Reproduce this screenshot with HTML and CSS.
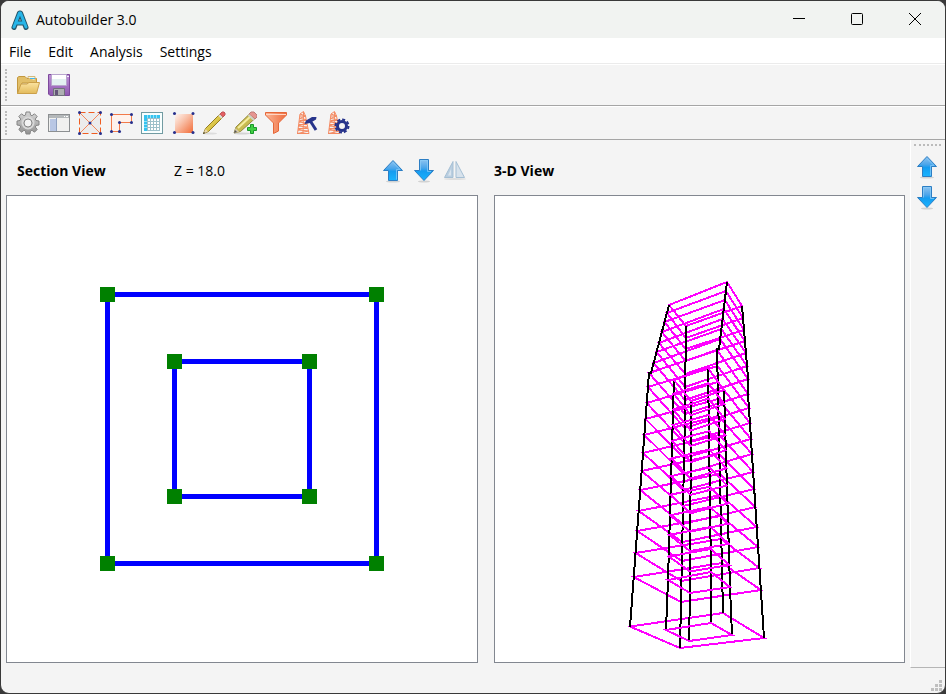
FILE: index.html
```html
<!DOCTYPE html>
<html lang="en">
<head>
<meta charset="utf-8">
<title>Autobuilder 3.0</title>
<link rel="stylesheet" href="styles.css">
</head>
<body>
<svg class="defs" aria-hidden="true">
  <defs>
    <linearGradient id="blue" x1="0" y1="0" x2="0" y2="1"><stop offset="0" stop-color="#8fc4f0"/><stop offset=".4" stop-color="#4ba5ea"/><stop offset=".55" stop-color="#159cf0"/><stop offset="1" stop-color="#18b4ff"/></linearGradient>
    <linearGradient id="gold" x1="0" y1="0" x2="0" y2="1"><stop offset="0" stop-color="#fbe3a0"/><stop offset="1" stop-color="#e3bb5c"/></linearGradient>
    <linearGradient id="purple" x1="0" y1="0" x2="0" y2="1"><stop offset="0" stop-color="#bd91d6"/><stop offset="1" stop-color="#8e58b0"/></linearGradient>
    <linearGradient id="steel" x1="0" y1="0" x2="0" y2="1"><stop offset="0" stop-color="#d6d6d6"/><stop offset="1" stop-color="#929292"/></linearGradient>
    <linearGradient id="orange" x1="0" y1="0" x2="1" y2="1"><stop offset="0" stop-color="#fff5f0"/><stop offset=".4" stop-color="#f9c3ac"/><stop offset="1" stop-color="#f26c38"/></linearGradient>
    <linearGradient id="funnel" x1="0" y1="0" x2="1" y2="0"><stop offset="0" stop-color="#fbb595"/><stop offset="1" stop-color="#ee6c3d"/></linearGradient>
    <linearGradient id="pencil" x1="0" y1="0" x2="1" y2="1"><stop offset="0" stop-color="#fff27a"/><stop offset="1" stop-color="#b99b18"/></linearGradient>
    <symbol id="arrow-up" viewBox="0 0 24 24">
      <ellipse cx="12" cy="22.5" rx="7" ry="1" fill="#d2d2d2"/>
      <path d="M12 1.500 21.500 11.500H16.500V21.500H7.500V11.500H2.500Z" fill="url(#blue)" stroke="#2c7ec4"/>
      <path d="M12 3.500 19 10.500H15.500V20.500" fill="none" stroke="#8bcdf8" opacity=".7"/>
    </symbol>
    <symbol id="arrow-down" viewBox="0 0 24 24">
      <ellipse cx="12" cy="22.5" rx="6" ry="1" fill="#d2d2d2"/>
      <path d="M7.500 .5H16.500V11.500H21.500L12 21.500 2.500 11.500H7.500Z" fill="url(#blue)" stroke="#2c7ec4"/>
      <path d="M8.500 11.500V1.500H15.500V12.500H19" fill="none" stroke="#8bcdf8" opacity=".7"/>
    </symbol>
    <symbol id="tower" viewBox="0 0 24 24">
      <path d="M5 3 8.500 .5 10.500 5 14 22.500M5 3 2.500 22.500M8.500 1 8 22M5 3 10.500 5 4.500 7.500 11 8.500 4 11 11.500 12 3.500 15 12.500 16 3 19 13.500 20 2.500 22.500M4.500 5H10.500M4.500 9.500H11.500M4 13.500H12M3 17.500H13M2 22.500H14" fill="none" stroke="#f48a62"/>
    </symbol>
  </defs>
</svg>
<div class="window">
  <header class="titlebar">
    <svg class="logo" viewBox="0 0 18 20"><path d="M3 17.500 8.500 3H9.500L15 17.500M5.500 13H12.500" fill="none" stroke="#24566b" stroke-width="5" stroke-linejoin="round" stroke-linecap="round"/><path d="M3 17 8.500 3H9.500L15 17M5.500 13H12.500" fill="none" stroke="#27b5e8" stroke-width="3" stroke-linejoin="round" stroke-linecap="round"/></svg>
    <span class="title">Autobuilder 3.0</span>
    <button class="caption" aria-label="Minimize"><svg viewBox="0 0 14 14"><path d="M1 6.500H13" stroke="#000"/></svg></button>
    <button class="caption" aria-label="Maximize"><svg viewBox="0 0 14 14"><rect x="1.500" y="1.500" width="11" height="11" rx="1" fill="none" stroke="#000"/></svg></button>
    <button class="caption" aria-label="Close"><svg viewBox="0 0 14 14"><path d="M1 1 13 13M13 1 1 13" stroke="#000"/></svg></button>
  </header>
  <nav class="menubar">
    <button>File</button><button>Edit</button><button>Analysis</button><button>Settings</button>
  </nav>
  <div class="toolbar toolbar-file" role="toolbar">
    <span class="grip"></span>
    <button aria-label="Open"><svg viewBox="0 0 24 24"><path d="M1.500 20.500V4.500L3 3.500H9L11 5.500H20.500V10H6Z" fill="#e2bf69" stroke="#c3983f"/><path d="M12 5V3.500H19V7" fill="#f5f5e8" stroke="#d4b878"/><path d="M14 5.500H19" stroke="#3fb6ef"/><path d="M1.500 20.500 5 11H11L13 9.500H23.500L20.500 20.500Z" fill="url(#gold)" stroke="#cba04a"/></svg></button>
    <button aria-label="Save"><svg viewBox="0 0 24 24"><path d="M1.500 1.500H22.500V22.500H3L1.500 21Z" fill="url(#purple)" stroke="#7e489d"/><path d="M4.500 1.500H19.500V12.500H4.500Z" fill="#e3f1f1" stroke="#b9a5ce"/><path d="M5 2H19V6H5Z" fill="#fff"/><path d="M6.500 15.500H17.500V22.500H6.500Z" fill="#aeb0b2" stroke="#70727b"/><path d="M8 17H11V22H8Z" fill="#65557a"/><path d="M20 3H22V4H20Z" fill="#f6ebff"/></svg></button>
  </div>
  <div class="toolbar" role="toolbar">
    <span class="grip"></span>
    <button aria-label="Options"><svg viewBox="0 0 24 24"><path d="M9.500 4 10 1H14L14.500 4 16 4.700 18.500 2.800 21.200 5.500 19.300 8 20 9.500 23 10V14L20 14.500 19.300 16 21.200 18.500 18.500 21.200 16 19.300 14.500 20 14 23H10L9.500 20 8 19.300 5.500 21.200 2.800 18.500 4.700 16 4 14.500 1 14V10L4 9.500 4.700 8 2.800 5.500 5.500 2.800 8 4.700Z" fill="url(#steel)" stroke="#858585"/><circle cx="12" cy="12" r="5.500" fill="none" stroke="#d8d8d8" stroke-width="2"/><circle cx="12" cy="12" r="4" fill="#f4f4f4" stroke="#888"/></svg></button>
    <button aria-label="Panels"><svg viewBox="0 0 24 24"><rect x="1.500" y="3.500" width="21" height="17" fill="#f1f1f0" stroke="#8c8f91"/><path d="M2 4H22V7H2Z" fill="#b4b8ba"/><path d="M3 8H9V20H3Z" fill="#b9c7e4"/><path d="M9.500 7V20" stroke="#8fa1c0"/><path d="M17 5.500H18M19 5.500H21" stroke="#fff"/></svg></button>
    <button aria-label="Braced section"><svg viewBox="0 0 24 24"><rect x="2" y="2" width="20" height="20" fill="#ececec"/><path d="M1.500 1.500H22.500V22.500H1.500Z" fill="none" stroke="#ef5d22" stroke-dasharray="6 3"/><path d="M1.500 1.500 22.500 22.500M22.500 1.500 1.500 22.500" stroke="#f5885c"/><g fill="#28308c"><circle cx="1.500" cy="1.500" r="1.500"/><circle cx="22.500" cy="1.500" r="1.500"/><circle cx="1.500" cy="22.500" r="1.500"/><circle cx="22.500" cy="22.500" r="1.500"/><circle cx="12" cy="12" r="1.500"/></g></svg></button>
    <button aria-label="Floor plan"><svg viewBox="0 0 24 24"><path d="M2.500 3.500H22.500V11.500H10.500V20.500H2.500Z" fill="#fff2ec" stroke="#f27a4a"/><g fill="#28308c"><circle cx="2.500" cy="3.500" r="1.500"/><circle cx="22.500" cy="3.500" r="1.500"/><circle cx="22.500" cy="11.500" r="1.500"/><circle cx="10.500" cy="11.500" r="1.500"/><circle cx="10.500" cy="20.500" r="1.500"/><circle cx="2.500" cy="20.500" r="1.500"/></g></svg></button>
    <button aria-label="Table"><svg viewBox="0 0 24 24"><rect x="1.500" y="1.500" width="21" height="21" fill="#f8ffff" stroke="#719ba2"/><path d="M4 4H20V20H4Z" fill="#9dc0ca"/><path d="M4 4H20V7H4ZM4 7H7V20H4Z" fill="#35c3ef"/><path d="M8 8H10V10H8ZM11 8H13V10H11ZM14 8H16V10H14ZM17 8H19V10H17ZM8 11H10V13H8ZM11 11H13V13H11ZM14 11H16V13H14ZM17 11H19V13H17ZM8 14H10V16H8ZM11 14H13V16H11ZM14 14H16V16H14ZM17 14H19V16H17ZM8 17H10V19H8ZM11 17H13V19H11ZM14 17H16V19H14ZM17 17H19V19H17Z" fill="#fff"/><path d="M7.500 4V7M10.500 4V7M13.500 4V7M16.500 4V7M4 10.500H7M4 13.500H7M4 16.500H7" stroke="#91e2fa"/></svg></button>
    <button aria-label="Panel"><svg viewBox="0 0 24 24"><path d="M4 3H22V22H4Z" fill="url(#orange)"/><g fill="#28308c"><circle cx="3.500" cy="2.500" r="1.500"/><circle cx="22" cy="2.500" r="1.500"/><circle cx="3.500" cy="21.500" r="1.500"/><circle cx="22" cy="21.500" r="1.500"/></g></svg></button>
    <button aria-label="Edit"><svg viewBox="0 0 24 24"><ellipse cx="8" cy="22.500" rx="7" ry="1" fill="#ddd"/><path d="M1.500 22.500 3.500 17.500 18 3 21 6 6.500 20.500Z" fill="url(#pencil)" stroke="#947c23"/><path d="M18 3 20 1H22L23 2V4L21 6Z" fill="#e45e62" stroke="#bf5659"/><path d="M17 4 20 7" stroke="#ddd" stroke-width="2"/><path d="M1.500 22.500 3.500 18 6 20.500Z" fill="#e9d6ae"/><path d="M1 23 2 21 3 22Z" fill="#222"/></svg></button>
    <button aria-label="Add element"><svg viewBox="0 0 24 24"><ellipse cx="9" cy="22.500" rx="8" ry="1" fill="#d4d4d4"/><path d="M1 22 3 16 17 2.500 22 7.500 7.500 20.500Z" fill="#c8bb51" stroke="#968b42"/><path d="M5 17 18.500 4.500" stroke="#f5eda0" stroke-width="2"/><path d="M16 3 18 1H21L24 4V6L22 8Z" fill="#e69591" stroke="#bd7d79"/><path d="M15.500 4 21 9" stroke="#cfd3c8" stroke-width="2"/><path d="M1 22 2.500 17 6.500 21Z" fill="#d5c9a8"/><path d="M1 22 2 19 4 21Z" fill="#555"/><path d="M17.500 13.500H20.500V16.500H23.500V19.500H20.500V22.500H17.500V19.500H14.500V16.500H17.500Z" fill="#40cf42" stroke="#18982a"/></svg></button>
    <button aria-label="Filter"><svg viewBox="0 0 24 24"><path d="M1.500 1.500H22.500V4L14.500 12V20L9.500 22.500V12L1.500 4Z" fill="url(#funnel)" stroke="#e66739"/><path d="M2 3.500H22" stroke="#ffd6c4"/></svg></button>
    <button aria-label="Build tower"><svg viewBox="0 0 24 24"><use href="#tower" width="24" height="24"/><path d="M9.500 13 11 9.500 17 6 21.500 6 21 8.500 15 12Z" fill="#27348b"/><path d="M15 9.500 21 19" stroke="#27348b" stroke-width="3"/></svg></button>
    <button aria-label="Tower settings"><svg viewBox="0 0 24 24"><use href="#tower" width="24" height="24"/><circle cx="16" cy="15" r="4.500" fill="#f4f4f4" stroke="#27348b" stroke-width="3"/><circle cx="16" cy="15" r="6.500" fill="none" stroke="#27348b" stroke-width="2" stroke-dasharray="3 2"/></svg></button>
  </div>
  <div class="workspace">
    <main class="views">
      <section class="view view-section">
        <div class="view-head">
          <h2>Section View</h2><span class="level">Z = 18.0</span>
          <button aria-label="Level up"><svg><use href="#arrow-up"/></svg></button>
          <button aria-label="Level down"><svg><use href="#arrow-down"/></svg></button>
          <button aria-label="Mirror" disabled><svg viewBox="0 0 24 24"><ellipse cx="12" cy="20" rx="11" ry="1" fill="#dedede"/><path d="M10 2.500V18.500H1.500Z" fill="#b9cee0" stroke="#a5bfd4"/><path d="M13 2.500V18.500H21.500Z" fill="#d7e2ec" stroke="#a5bfd4"/><path d="M8 10V16.500H5Z" fill="#d9e4ee"/></svg></button>
        </div>
        <div class="canvas"><svg viewBox="0 0 470 466" role="img" aria-label="Section plan">
          <g fill="none" stroke="#00f" stroke-width="5"><rect x="100.500" y="98.500" width="269" height="269"/><rect x="167.500" y="165.500" width="135" height="135"/></g>
          <g fill="#008000"><rect x="93" y="91" width="15" height="15"/><rect x="362" y="91" width="15" height="15"/><rect x="93" y="360" width="15" height="15"/><rect x="362" y="360" width="15" height="15"/><rect x="160" y="158" width="15" height="15"/><rect x="295" y="158" width="15" height="15"/><rect x="160" y="293" width="15" height="15"/><rect x="295" y="293" width="15" height="15"/></g>
        </svg></div>
      </section>
      <section class="view view-model">
        <div class="view-head"><h2>3-D View</h2></div>
        <div class="canvas"><svg id="model" viewBox="495 196 409 466" role="img" aria-label="Tower wireframe"></svg></div>
      </section>
    </main>
    <aside class="sidebar">
      <span class="grip-h"></span>
      <button aria-label="View up"><svg><use href="#arrow-up"/></svg></button>
      <button aria-label="View down"><svg><use href="#arrow-down"/></svg></button>
    </aside>
  </div>
  <footer class="statusbar"><svg class="resize" viewBox="0 0 11 11"><path d="M8 0H11V3H8ZM4 4H7V7H4ZM8 4H11V7H8ZM0 8H3V11H0ZM4 8H7V11H4ZM8 8H11V11H8Z" fill="#bfbfbf"/></svg></footer>
</div>
<script src="model.js"></script>
</body>
</html>
```
FILE: styles.css
```css
* { box-sizing: border-box; }
body {
  margin: 0;
  background: #393939;
  color: #000;
  font: 14px/20px "Open Sans", "Noto Sans", sans-serif;
}
button {
  display: flex;
  align-items: center;
  justify-content: center;
  margin: 0;
  padding: 0;
  border: 0;
  background: none;
  color: inherit;
  font: inherit;
}
svg { display: block; }
.defs { position: absolute; width: 0; height: 0; }
.window {
  display: flex;
  flex-direction: column;
  height: 100vh;
  border: 1px solid #393939;
  border-radius: 9px;
  background: #f4f4f4;
  overflow: hidden;
}
.titlebar {
  display: flex;
  align-items: center;
  height: 37px;
  padding-left: 10px;
  background: #f1f3f1;
}
.logo { width: 18px; height: 20px; }
.title { flex: 1; padding-left: 7px; }
.caption { width: 58px; height: 35px; align-self: flex-start; }
.caption:last-child { margin-right: 1px; }
.caption svg { width: 14px; height: 14px; }
.menubar {
  display: flex;
  gap: 17px;
  height: 26px;
  padding: 2px 0 0 8px;
  background: #fff;
  border-bottom: 1px solid #ebebeb;
}
.toolbar {
  display: flex;
  align-items: center;
  gap: 7px;
  height: 34px;
  padding-left: 4px;
  border-top: 1px solid #fff;
  border-bottom: 1px solid #a5a5a5;
}
.toolbar-file { height: 42px; }
.toolbar svg, .view-head svg, .sidebar svg { width: 24px; height: 24px; }
.grip {
  align-self: stretch;
  width: 2px;
  margin: 4px 0;
  border-left: 2px dotted #bbb;
}
.grip + button { margin-left: 2px; }
.workspace { display: flex; flex: 1; min-height: 0; }
.views {
  display: flex;
  flex: 1;
  gap: 16px;
  min-width: 0;
  padding: 0 5px 5px;
}
.view { display: flex; flex-direction: column; min-width: 0; }
.view-section { flex: 472 1 0; }
.view-model { flex: 411 1 0; }
.view-head {
  display: flex;
  align-items: center;
  gap: 7px;
  height: 55px;
  padding: 6px 11px 0 0;
}
h2 { margin: 0; font-size: 14px; line-height: 20px; }
.view-section h2 { width: 150px; padding-left: 11px; }
.level { flex: 1; padding-left: 11px; }
.canvas {
  flex: 1;
  min-height: 0;
  border: 1px solid #828790;
  background: #fff;
}
.canvas svg { width: 100%; height: 100%; }
.sidebar {
  display: flex;
  flex-direction: column;
  align-items: center;
  gap: 7px;
  width: 35px;
  padding: 4px 2px 0 0;
  border-left: 1px solid #fff;
  border-bottom: 1px solid #b5b5b5;
}
.grip-h { width: 27px; margin-bottom: 2px; border-top: 2px dotted #bbb; }
.statusbar {
  display: flex;
  align-items: flex-end;
  justify-content: flex-end;
  height: 25px;
  padding: 0 3px 2px;
}
.resize { width: 11px; height: 11px; }
```
FILE: model.js
```js
// Corner order: left, back, right, front. Each entry lists the y of every floor.
const outerY = [
  [626.5, 577, 553, 531, 511, 490, 471, 453, 435, 419, 403, 387, 373, 363, 352, 343, 332, 322, 313, 305],
  [613, 563, 539, 516, 495, 474, 454, 435, 416, 399, 382, 366, 350, 339, 329, 319, 309, 300, 291, 282],
  [638, 590, 568, 547, 527, 507, 489, 472, 454, 439, 423, 408, 394, 379, 366, 353, 341, 330, 318, 306],
  [648, 602, 581, 561, 542, 524, 506, 490, 474, 458, 443, 428, 414, 400, 387, 374, 361, 349, 338, 326]
];
// Column axes: base, setback and top positions.
const outerAxis = [
  [[630, 627], [649, 373], [651, 373], [669, 305]],
  [[723, 613], [717, 349], [719, 349], [727, 282]],
  [[764, 638], [748, 394], [748, 378], [742, 306]],
  [[680, 648], [685, 414], [685, 400], [686, 326]]
];
const innerAxis = [
  [[666, 630], [668, 580], [674, 380]],
  [[711, 623], [711, 572], [708, 368]],
  [[732, 635], [730, 587], [724, 390]],
  [[689, 641], [690, 593], [691, 401]]
];
const SVG = "http://www.w3.org/2000/svg";
const model = document.getElementById("model");

function add(points, color, closed) {
  const el = document.createElementNS(SVG, closed ? "polygon" : "polyline");
  el.setAttribute("points", points.map(p => p.join(",")).join(" "));
  el.setAttribute("fill", "none");
  el.setAttribute("stroke", color);
  el.setAttribute("stroke-width", 2);
  el.setAttribute("shape-rendering", "crispEdges");
  model.appendChild(el);
}

function xAt(axis, y, upper) {
  const [a, b] = upper ? [axis[2], axis[3]] : [axis[0], axis[1]];
  return a[0] + (b[0] - a[0]) * (y - a[1]) / (b[1] - a[1]);
}

for (let floor = 0; floor < 20; floor++) {
  add(outerAxis.map((axis, i) => {
    const y = outerY[i][floor];
    return [xAt(axis, y, floor > 12), y];
  }), "#f0f", true);
}

outerAxis.concat(innerAxis).forEach(axis => add(axis, "#000", false));

add(innerAxis.map(axis => axis[0]), "#f0f", true);
for (let floor = 1; floor <= 12; floor++) {
  add(innerAxis.map((axis, i) => {
    const column = outerY[i];
    const t = (column[1] - column[floor]) / (column[1] - column[12]);
    return [axis[1][0] + (axis[2][0] - axis[1][0]) * t, axis[1][1] + (axis[2][1] - axis[1][1]) * t];
  }), "#f0f", true);
}
```
